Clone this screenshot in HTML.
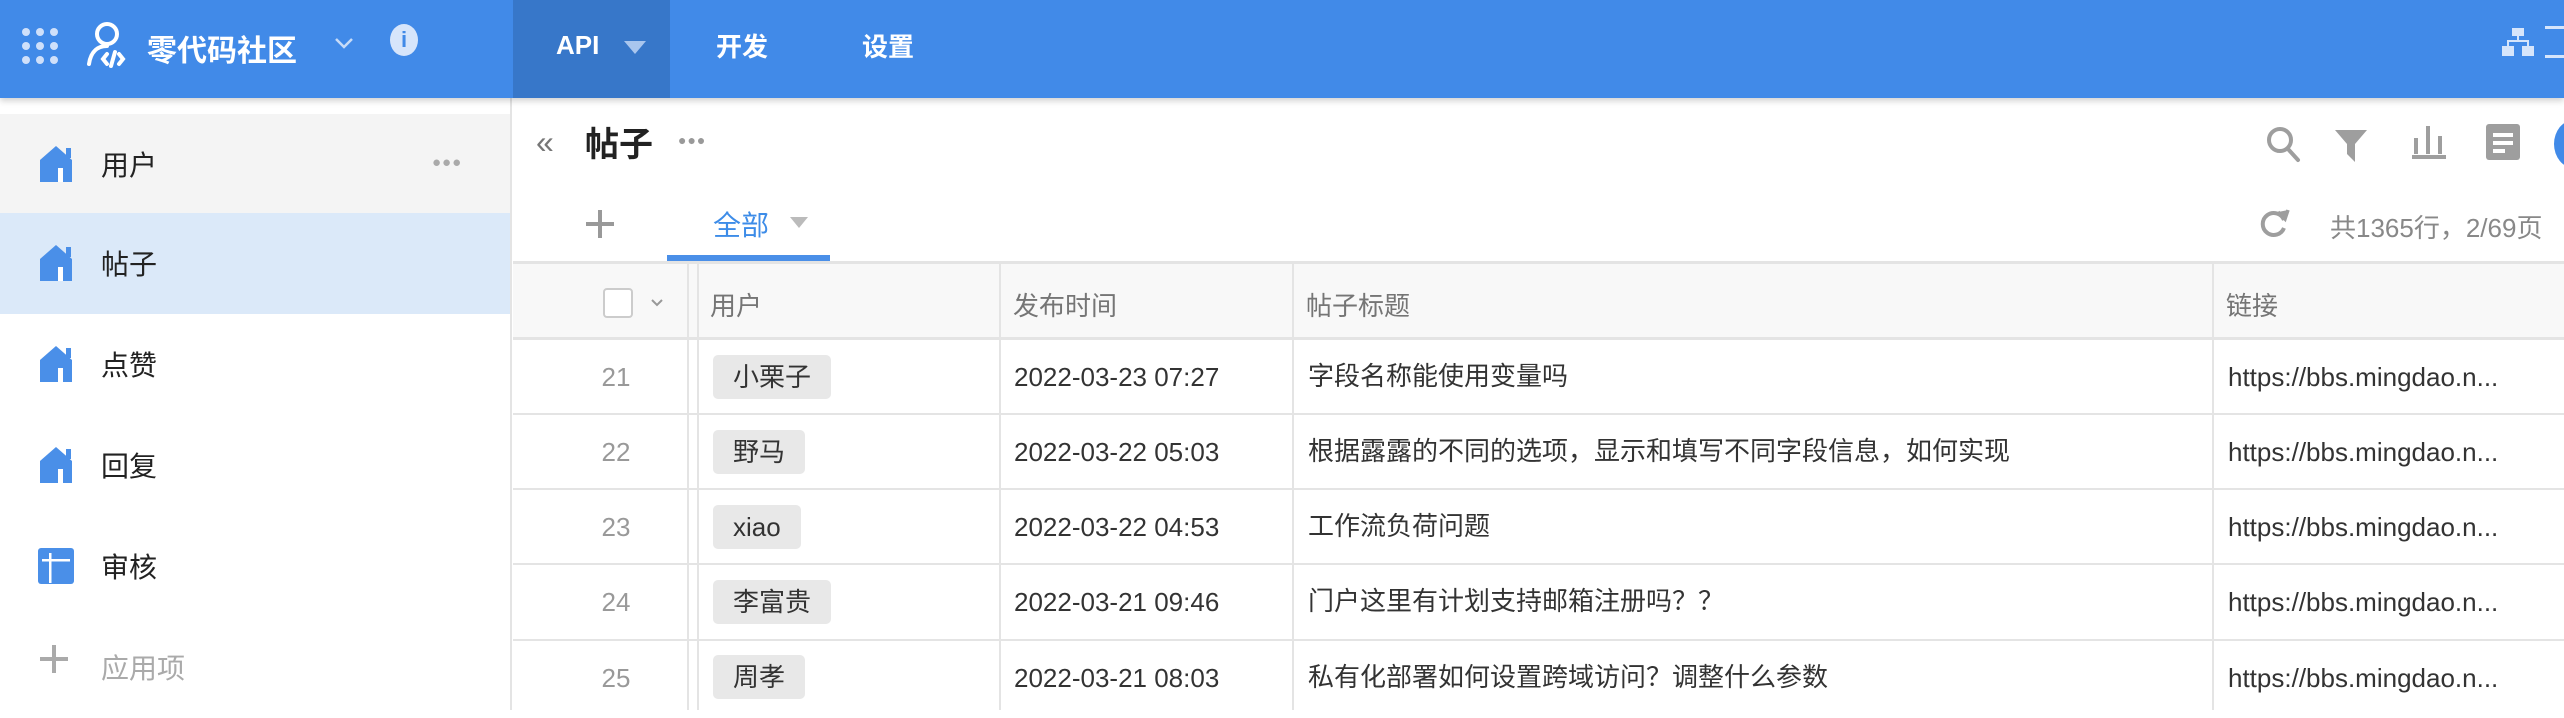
<!DOCTYPE html>
<html><head><meta charset="utf-8"><style>
*{margin:0;padding:0;box-sizing:border-box}
body{width:2564px;height:710px;overflow:hidden;background:#fff;font-family:"Liberation Sans","Noto Sans CJK SC",sans-serif;position:relative;color:#333}
.a{position:absolute}
.hdr{left:0;top:0;width:2564px;height:98px;background:#418ae8;box-shadow:0 3px 6px rgba(0,0,0,.18);z-index:5}
.ht{color:#fff;font-size:26px;top:27px;white-space:nowrap}
.side{left:0;top:98px;width:512px;height:612px;border-right:2px solid #e4e4e4;background:#fff}
.si{left:0;width:510px;height:101px}
.si .t{position:absolute;left:101px;top:30px;font-size:28px;color:#222}
.si svg{position:absolute;left:36px;top:30px}
.cell{position:absolute;font-size:26px;white-space:nowrap}
.cj{margin-top:-6px}
.hl{position:absolute;background:#e4e4e4}
.tag{position:absolute;left:713px;height:44px;background:#e8e8e8;border-radius:5px;font-size:26px;padding:0 20px;line-height:44px;color:#333}
.num{position:absolute;width:80px;left:576px;text-align:center;color:#999;font-size:26px}
</style></head><body>
<div class="a hdr">
  <svg class="a" style="left:20px;top:26px" width="40" height="40" viewBox="0 0 40 40" fill="#cfe0fa">
    <circle cx="6" cy="6" r="4"/><circle cx="20" cy="6" r="4"/><circle cx="34" cy="6" r="4"/>
    <circle cx="6" cy="20" r="4"/><circle cx="20" cy="20" r="4"/><circle cx="34" cy="20" r="4"/>
    <circle cx="6" cy="34" r="4"/><circle cx="20" cy="34" r="4"/><circle cx="34" cy="34" r="4"/>
  </svg>
  <svg class="a" style="left:85px;top:20px" width="50" height="50" viewBox="0 0 50 50" fill="none" stroke="#fff" stroke-width="4" stroke-linecap="round">
    <circle cx="22" cy="14" r="10"/><path d="M4 44 C6 30 14 26 22 26"/><path d="M22 34 l-4 5 4 5"/><path d="M30 32 l-4 14"/><path d="M34 34 l4 5 -4 5"/>
  </svg>
  <div class="a ht" style="left:147px;top:26px;font-size:30px;font-weight:bold">零代码社区</div>
  <svg class="a" style="left:334px;top:36px" width="20" height="14" viewBox="0 0 20 14"><path d="M2 3 l8 8 8-8" stroke="#c7dbf7" stroke-width="2.5" fill="none"/></svg>
  <div class="a" style="left:390px;top:24px;width:28px;height:32px;border-radius:50%;background:#d6e5fb;color:#418ae8;font-weight:bold;font-size:22px;text-align:center;line-height:32px">i</div>
  <div class="a" style="left:513px;top:0;width:157px;height:98px;background:#3777c9"></div>
  <div class="a ht" style="left:556px;font-weight:bold;top:30px">API</div>
  <div class="a" style="left:624px;top:41px;width:0;height:0;border-left:11px solid transparent;border-right:11px solid transparent;border-top:13px solid #a9c6ee"></div>
  <div class="a ht" style="left:716px;font-weight:bold">开发</div>
  <div class="a ht" style="left:862px;font-weight:bold">设置</div>
  <svg class="a" style="left:2502px;top:26px" width="32" height="32" viewBox="0 0 32 32" fill="#d6e5fb"><rect x="10" y="2" width="12" height="8"/><rect x="15" y="10" width="2" height="6"/><rect x="5" y="14" width="22" height="2"/><rect x="5" y="14" width="2" height="6"/><rect x="25" y="14" width="2" height="6"/><rect x="0" y="20" width="12" height="10"/><rect x="20" y="20" width="12" height="10"/></svg>
  <div class="a" style="left:2545px;top:26px;width:20px;height:32px;border-bottom:3px solid #d6e5fb;border-top:3px solid #d6e5fb"></div>
</div>

<div class="a side">
  <div class="a si" style="top:16px;background:#f4f4f4"><svg width="40" height="40" viewBox="0 0 40 40"><path d="M20 2 L36 16 V38 H4 V16 Z" fill="#4a8fe8"/><rect x="30" y="4" width="5" height="10" fill="#4a8fe8"/><rect x="22" y="24" width="5" height="14" fill="#fff"/></svg><div class="t">用户</div><div class="a" style="left:432px;top:40px;color:#aaa;font-size:15px;letter-spacing:1px">●●●</div></div>
  <div class="a si" style="top:115px;background:#dbe9f9"><svg width="40" height="40" viewBox="0 0 40 40"><path d="M20 2 L36 16 V38 H4 V16 Z" fill="#4a8fe8"/><rect x="30" y="4" width="5" height="10" fill="#4a8fe8"/><rect x="22" y="24" width="5" height="14" fill="#fff"/></svg><div class="t">帖子</div></div>
  <div class="a si" style="top:216px"><svg width="40" height="40" viewBox="0 0 40 40"><path d="M20 2 L36 16 V38 H4 V16 Z" fill="#4a8fe8"/><rect x="30" y="4" width="5" height="10" fill="#4a8fe8"/><rect x="22" y="24" width="5" height="14" fill="#fff"/></svg><div class="t">点赞</div></div>
  <div class="a si" style="top:317px"><svg width="40" height="40" viewBox="0 0 40 40"><path d="M20 2 L36 16 V38 H4 V16 Z" fill="#4a8fe8"/><rect x="30" y="4" width="5" height="10" fill="#4a8fe8"/><rect x="22" y="24" width="5" height="14" fill="#fff"/></svg><div class="t">回复</div></div>
  <div class="a si" style="top:418px"><svg width="40" height="40" viewBox="0 0 40 40"><rect x="2" y="2" width="36" height="36" rx="3" fill="#4a8fe8"/><rect x="6" y="13" width="28" height="2.5" fill="#fff"/><rect x="13" y="7" width="2.5" height="30" fill="#fff"/></svg><div class="t">审核</div></div>
  <div class="a si" style="top:519px"><div class="a" style="left:40px;top:40px;width:28px;height:4px;background:#aaa"></div><div class="a" style="left:52px;top:28px;width:4px;height:28px;background:#aaa"></div><div class="t" style="color:#aaa">应用项</div></div>
</div>

<!-- main top -->
<div class="a" style="left:536px;top:124px;color:#777;font-size:32px">«</div>
<div class="a" style="left:585px;top:117px;font-size:34px;font-weight:bold;color:#222">帖子</div>
<div class="a" style="left:678px;top:132px;color:#999;font-size:14px;letter-spacing:1px">●●●</div>
<svg class="a" style="left:2266px;top:126px" width="36" height="38" viewBox="0 0 36 38" fill="none" stroke="#9e9e9e" stroke-width="4"><circle cx="14" cy="14" r="11"/><path d="M22 23 L32 34" stroke-linecap="round"/></svg>
<svg class="a" style="left:2333px;top:128px" width="36" height="36" viewBox="0 0 36 36" fill="#9e9e9e"><path d="M2 2 H34 L22 16 V34 L14 26 V16 Z"/></svg>
<svg class="a" style="left:2412px;top:124px" width="34" height="36" viewBox="0 0 34 36" fill="#9e9e9e"><rect x="2" y="14" width="4" height="16"/><rect x="14" y="2" width="4" height="28"/><rect x="26" y="12" width="4" height="18"/><rect x="0" y="31" width="34" height="4"/></svg>
<svg class="a" style="left:2486px;top:124px" width="34" height="36" viewBox="0 0 34 36"><rect x="0" y="0" width="34" height="36" rx="3" fill="#9e9e9e"/><rect x="7" y="9" width="20" height="4" fill="#fff"/><rect x="7" y="17" width="20" height="4" fill="#fff"/><rect x="7" y="25" width="12" height="4" fill="#fff"/></svg>
<div class="a" style="left:2554px;top:120px;width:40px;height:48px;border-radius:50%;background:#418ae8"></div>

<div class="a" style="left:586px;top:222px;width:28px;height:4px;background:#999"></div>
<div class="a" style="left:598px;top:210px;width:4px;height:28px;background:#999"></div>
<div class="a" style="left:713px;top:204px;font-size:28px;color:#3d8ce8">全部</div>
<div class="a" style="left:790px;top:217px;border-left:9px solid transparent;border-right:9px solid transparent;border-top:11px solid #bbb"></div>
<div class="a" style="left:667px;top:255px;width:163px;height:6px;background:#4a8fe8"></div>
<svg class="a" style="left:2258px;top:208px" width="32" height="32" viewBox="0 0 32 32" fill="none" stroke="#9e9e9e" stroke-width="4"><path d="M26 12 A11 11 0 1 0 26 20"/><path d="M20 4 L27 11 L30 2" stroke-width="3.5" fill="#9e9e9e"/></svg>
<div class="a" style="left:2330px;top:208px;font-size:26px;color:#888;white-space:nowrap">共1365行，2/69页</div>

<!-- table -->
<div class="a" style="left:513px;top:263px;width:2051px;height:75px;background:#f8f8f8"></div>
<div class="hl" style="left:513px;top:261px;width:2051px;height:3px"></div>
<div class="hl" style="left:513px;top:337px;width:2051px;height:3px"></div>
<div class="hl" style="left:513px;top:413px;width:2051px;height:2px"></div>
<div class="hl" style="left:513px;top:488px;width:2051px;height:2px"></div>
<div class="hl" style="left:513px;top:563px;width:2051px;height:2px"></div>
<div class="hl" style="left:513px;top:639px;width:2051px;height:2px"></div>
<div class="hl" style="left:687px;top:263px;width:2px;height:447px"></div>
<div class="hl" style="left:697px;top:263px;width:2px;height:447px"></div>
<div class="hl" style="left:999px;top:263px;width:2px;height:447px"></div>
<div class="hl" style="left:1292px;top:263px;width:2px;height:447px"></div>
<div class="hl" style="left:2212px;top:263px;width:2px;height:447px"></div>

<div class="a" style="left:603px;top:288px;width:30px;height:30px;border:2px solid #ccc;border-radius:4px;background:#fff"></div>
<svg class="a" style="left:650px;top:298px" width="14" height="10" viewBox="0 0 14 10"><path d="M2 2 l5 5 5-5" stroke="#999" stroke-width="2" fill="none"/></svg>
<div class="cell" style="left:710px;top:286px;color:#757575">用户</div>
<div class="cell" style="left:1013px;top:286px;color:#757575">发布时间</div>
<div class="cell" style="left:1306px;top:286px;color:#757575">帖子标题</div>
<div class="cell" style="left:2226px;top:286px;color:#757575">链接</div>

<div class="num" style="top:362px">21</div>
<div class="tag" style="top:355px">小栗子</div>
<div class="cell" style="left:1014px;top:362px">2022-03-23 07:27</div>
<div class="cell cj" style="left:1308px;top:362px">字段名称能使用变量吗</div>
<div class="cell" style="left:2228px;top:362px">https://bbs.mingdao.n...</div>

<div class="num" style="top:437px">22</div>
<div class="tag" style="top:430px">野马</div>
<div class="cell" style="left:1014px;top:437px">2022-03-22 05:03</div>
<div class="cell cj" style="left:1308px;top:437px">根据露露的不同的选项，显示和填写不同字段信息，如何实现</div>
<div class="cell" style="left:2228px;top:437px">https://bbs.mingdao.n...</div>

<div class="num" style="top:512px">23</div>
<div class="tag" style="top:505px">xiao</div>
<div class="cell" style="left:1014px;top:512px">2022-03-22 04:53</div>
<div class="cell cj" style="left:1308px;top:512px">工作流负荷问题</div>
<div class="cell" style="left:2228px;top:512px">https://bbs.mingdao.n...</div>

<div class="num" style="top:587px">24</div>
<div class="tag" style="top:580px">李富贵</div>
<div class="cell" style="left:1014px;top:587px">2022-03-21 09:46</div>
<div class="cell cj" style="left:1308px;top:587px">门户这里有计划支持邮箱注册吗？？</div>
<div class="cell" style="left:2228px;top:587px">https://bbs.mingdao.n...</div>

<div class="num" style="top:663px">25</div>
<div class="tag" style="top:655px">周孝</div>
<div class="cell" style="left:1014px;top:663px">2022-03-21 08:03</div>
<div class="cell cj" style="left:1308px;top:663px">私有化部署如何设置跨域访问？调整什么参数</div>
<div class="cell" style="left:2228px;top:663px">https://bbs.mingdao.n...</div>
</body></html>
